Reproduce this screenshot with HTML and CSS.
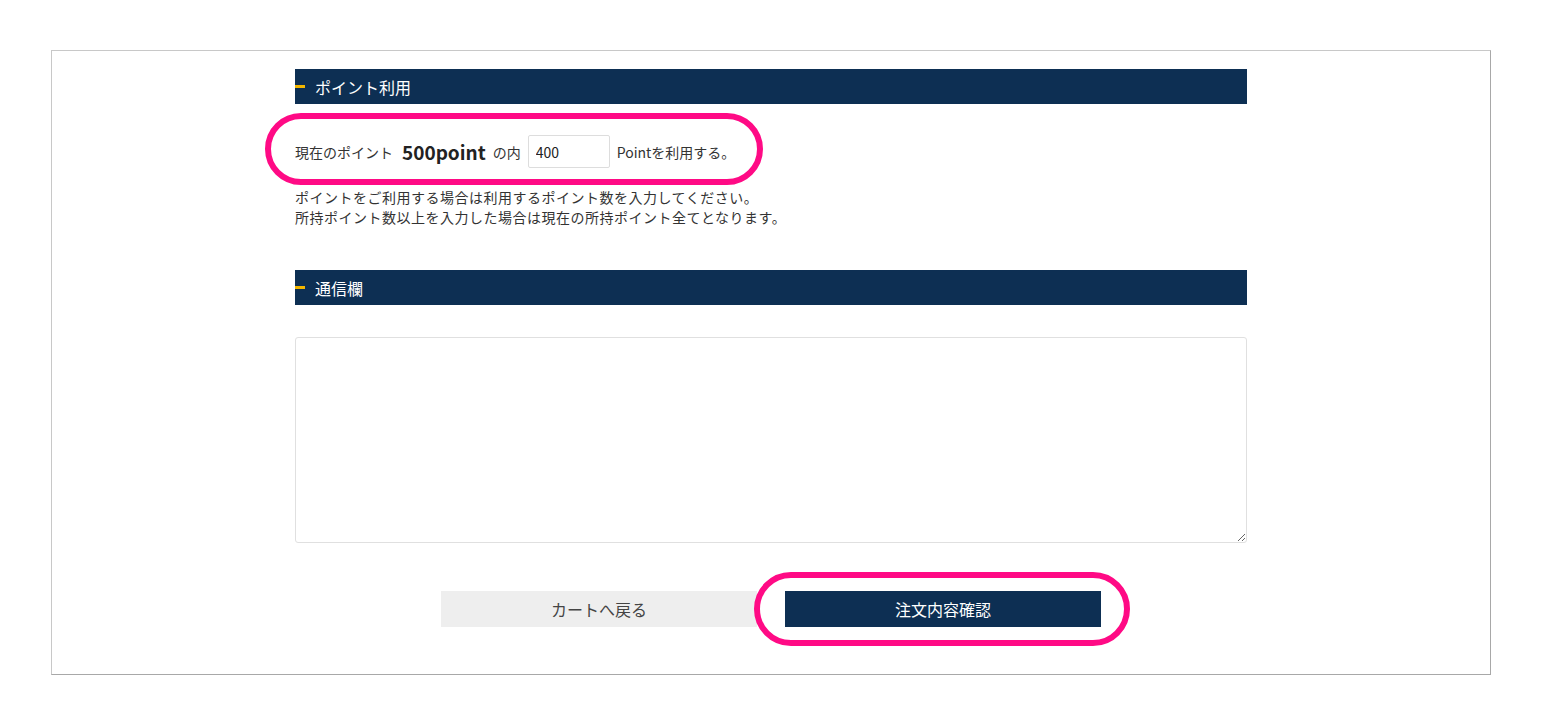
FILE: index.html
```html
<!DOCTYPE html>
<html lang="ja">
<head>
    <meta charset="UTF-8">
    <meta name="viewport" content="width=device-width, initial-scale=1.0">
    <title>ポイント利用</title>
    <link rel="stylesheet" href="styles.css">
</head>
<body>
    <div class="frame">
        <div class="content">
            <h2 class="section-title">ポイント利用</h2>
            <div class="point-row marked">
                <span>現在のポイント</span>
                <strong class="point-total">500point</strong>
                <span>の内</span>
                <input type="text" class="point-input" value="400">
                <span>Pointを利用する。</span>
            </div>
            <p class="note">
                ポイントをご利用する場合は利用するポイント数を入力してください。<br>
                所持ポイント数以上を入力した場合は現在の所持ポイント全てとなります。
            </p>

            <h2 class="section-title">通信欄</h2>
            <textarea class="message"></textarea>

            <div class="buttons">
                <button class="btn btn-back">カートへ戻る</button>
                <button class="btn btn-confirm marked">注文内容確認</button>
            </div>
        </div>
    </div>
</body>
</html>
```

FILE: styles.css
```css
body {
    margin: 0;
    background-color: #fff;
    font-family: "Noto Sans CJK JP", "Noto Sans", sans-serif;
    color: #333;
}
.frame {
    margin: 50px 0 0 51px;
    width: 1438px;
    border: 1px solid #c8c8c8;
    border-right-color: #a8a8a8;
    border-bottom-color: #a8a8a8;
}
.content {
    width: 952px;
    margin: 0 auto;
    padding: 18px 0 47px;
}
.section-title {
    position: relative;
    margin: 0;
    height: 35px;
    display: flex;
    align-items: center;
    padding-left: 20px;
    background-color: #0d2f53;
    color: #fff;
    font-size: 16px;
    font-weight: normal;
}
.section-title::before {
    content: "";
    position: absolute;
    left: 0;
    top: 16px;
    width: 10px;
    height: 3px;
    background-color: #f2b600;
}
.point-row {
    display: flex;
    align-items: center;
    gap: 7px;
    width: fit-content;
    margin-top: 31px;
    height: 33px;
    font-size: 14px;
}
.point-total {
    font-size: 19px;
    font-weight: bold;
    color: #222;
    margin: 0 0 0 2px;
}
.point-input {
    box-sizing: border-box;
    width: 82px;
    height: 33px;
    padding: 0 7px;
    border: 1px solid #ddd;
    border-radius: 2px;
    font-family: inherit;
    font-size: 14px;
    color: #222;
}
.marked {
    position: relative;
}
.marked::after {
    content: "";
    position: absolute;
    border: 6px solid #ff0a85;
    border-radius: 40px;
    pointer-events: none;
}
.point-row::after {
    left: -30px;
    right: -28px;
    top: -22px;
    bottom: -17px;
}
.note {
    margin: 19px 0 43px;
    font-size: 14px;
    line-height: 20px;
    letter-spacing: 0.5px;
}
.message {
    display: block;
    box-sizing: border-box;
    width: 100%;
    height: 206px;
    margin-top: 32px;
    border: 1px solid #e0e0e0;
    border-radius: 3px;
    resize: vertical;
}
.buttons {
    display: flex;
    justify-content: center;
    gap: 28px;
    margin-top: 48px;
}
.btn {
    width: 316px;
    height: 36px;
    border: none;
    font-family: inherit;
    font-size: 16px;
    cursor: pointer;
}
.btn-back {
    background-color: #eee;
    color: #444;
}
.btn-confirm {
    background-color: #0d2f53;
    color: #fff;
}
.btn-confirm::after {
    left: -31px;
    right: -29px;
    top: -19px;
    bottom: -19px;
}
```
